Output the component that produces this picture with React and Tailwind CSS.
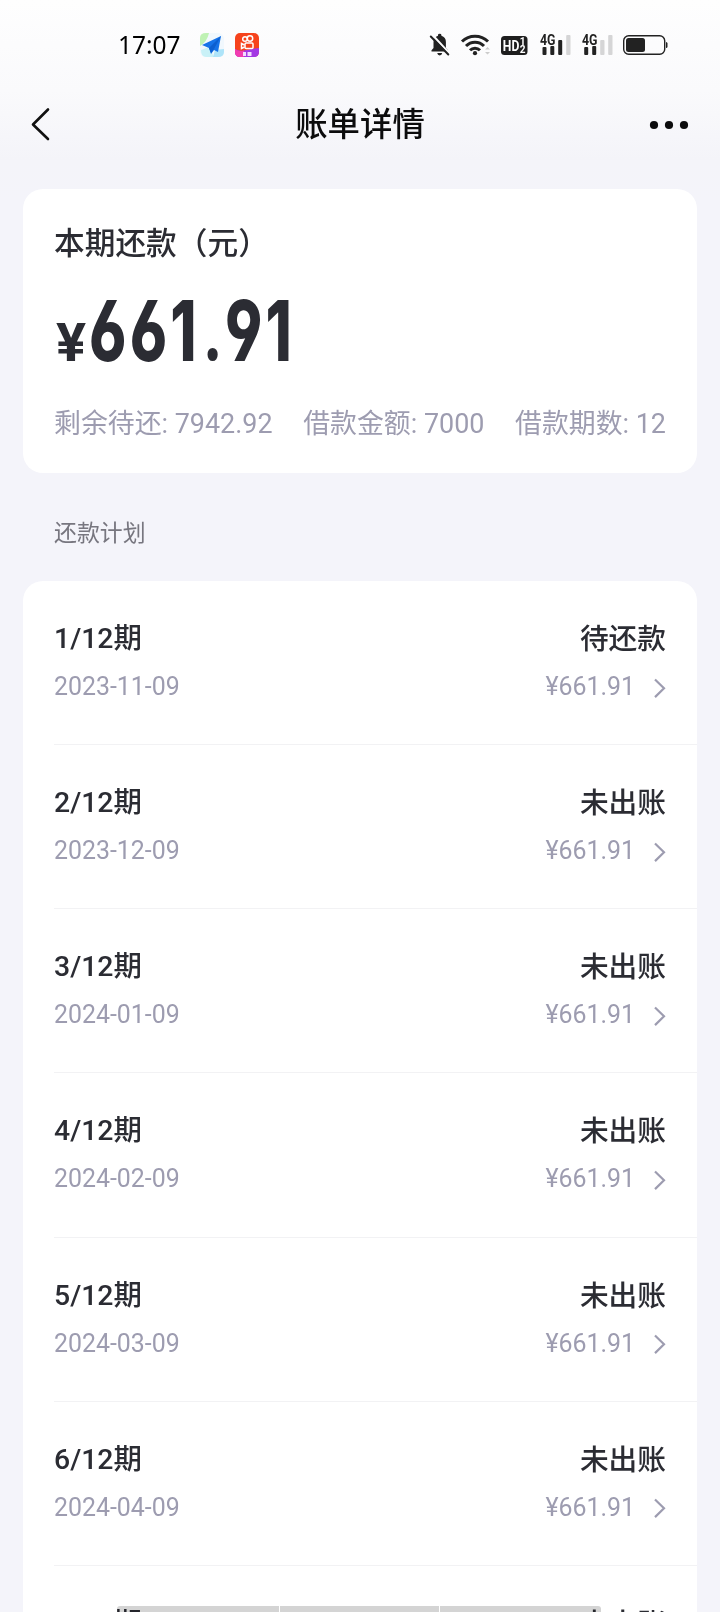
const installments = [
  ["1", "2023-11-09", "待还款"],
  ["2", "2023-12-09", "未出账"],
  ["3", "2024-01-09", "未出账"],
  ["4", "2024-02-09", "未出账"],
  ["5", "2024-03-09", "未出账"],
  ["6", "2024-04-09", "未出账"],
  ["7", "2024-05-09", "未出账"],
];

function StatusBar() {
  return (
    <div className="flex h-[90px] items-center pl-[118px] text-black">
      <span className="w-[81px] font-['Noto_Sans'] text-[24.5px] leading-[30px]">17:07</span>
      <svg className="h-[26px] w-[26px]" viewBox="0 0 26 26">
        <rect x="1" y="1" width="24" height="24" rx="6" fill="#f1f8fd" />
        <path d="M1 14V6q0-5 6-5h3Q8 10 1 14Z" fill="#bff2b4" />
        <path d="M2 18l8-3 5 10H7q-5 0-5-7Z" fill="#c9f1f7" />
        <path d="M16 18l9-1v3q0 5-6 5h-5Z" fill="#aee4f9" />
        <path d="M22 4 3 13l7 3 2 6 3-4 4 2Z" fill="#1673e8" />
        <path d="M22 4 10 16l2 5 3-4Z" fill="#0c5fd0" />
      </svg>
      <svg className="ml-[9px] h-[26px] w-[26px]" viewBox="0 0 26 26">
        <rect x="1" y="1" width="24" height="24" rx="5" fill="#f6431c" />
        <path d="M1 17q4 3 12 1t12-2v4q0 5-5 5H6q-5 0-5-5Z" fill="#a338e4" />
        <path d="M1 17q4 3 9 1.500v6.500H6q-5 0-5-5Z" fill="#f23cb0" />
        <g fill="none" stroke="#fff" strokeWidth="1.500">
          <circle cx="11" cy="7" r="2.300" />
          <circle cx="16" cy="6.500" r="2.700" />
          <rect x="11" y="11" width="8" height="5.500" rx="1" />
          <path d="M10.500 13 7.500 11.500v5l3-1.500" />
        </g>
        <path d="M9 20h3v4H9zM13.500 20h4v4h-4z" fill="#f3dcff" />
      </svg>
      <svg className="ml-[167px] h-[36px] w-[242px]" viewBox="428 27 242 36">
        <g fill="#222">
          <path d="M432.500 51.500v-1.300l2-2.200v-6q0-5 4.500-6.300v-.7q0-1.300 1.700-1.300t1.700 1.300v.7q4.500 1.300 4.500 6.300v6l2 2.200v1.300Z" />
          <path d="M438.200 53h5q-.4 2.400-2.500 2.400T438.200 53Z" />
        </g>
        <path d="m433.500 35 17 18.500" stroke="#fdfdfe" strokeWidth="2.200" />
        <path d="m431.800 36.500 17.500 18" stroke="#222" strokeWidth="2" strokeLinecap="round" />
        <g fill="none" stroke="#222" strokeWidth="3">
          <path d="M463 41.500a18.500 18.500 0 0 1 26 0" />
          <path d="M467 46a12.500 12.500 0 0 1 18 0" />
          <path d="M471 50.300a7 7 0 0 1 10 0" />
        </g>
        <circle cx="476" cy="53.200" r="2.100" fill="#222" />
        <path d="m486 49.500 2.500-2.500 2.500 2.500ZM486 52l2.500 2.500L491 52Z" fill="#ccc" />
        <rect x="502" y="36" width="26.500" height="19" rx="3.500" fill="#1e1e1e" />
        <g className="font-['Roboto']" fontWeight="700">
          <text x="503.800" y="51" fontSize="15.500" textLength="16.500" lengthAdjust="spacingAndGlyphs" fill="#fff">HD</text>
          <text x="520.800" y="45.200" fontSize="10" fill="#fff">1</text>
          <text x="520.800" y="53.400" fontSize="10" fill="#fff">2</text>
          <text x="541" y="45" fontSize="14.500" textLength="15.500" lengthAdjust="spacingAndGlyphs" fill="#222">4G</text>
          <text x="583" y="45" fontSize="14.500" textLength="15.500" lengthAdjust="spacingAndGlyphs" fill="#222">4G</text>
        </g>
        <g fill="#222">
          <rect x="543.500" y="47" width="4" height="8" rx="1" />
          <rect x="551.300" y="46" width="4" height="9" rx="1" />
          <rect x="559.200" y="40" width="4" height="15" rx="1" />
          <rect x="585.200" y="47" width="4" height="8" rx="1" />
          <rect x="593.200" y="46" width="4" height="9" rx="1" />
        </g>
        <g fill="#d5d5d6">
          <rect x="567.200" y="35" width="4.300" height="20" rx="1" />
          <rect x="601.200" y="40" width="4.300" height="15" rx="1" />
          <rect x="609.200" y="35" width="4.300" height="20" rx="1" />
        </g>
        <rect x="624.700" y="35.700" width="41" height="18.600" rx="5" fill="none" stroke="#222" strokeWidth="1.400" />
        <rect x="627" y="38" width="19" height="14" rx="2.500" fill="#222" />
        <path d="M667 42q1.500 0 1.500 1.500v3q0 1.500-1.500 1.500Z" fill="#222" />
      </svg>
    </div>
  );
}

function Header() {
  return (
    <header className="flex h-[68px] items-center justify-between pr-[31px] pl-[31px]">
      <svg className="h-[36px] w-[40px]" viewBox="0 0 40 36" fill="none">
        <path d="M17 3.500 2 18.500 17 33" stroke="#111" strokeWidth="2.600" strokeLinecap="round" strokeLinejoin="round" />
      </svg>
      <h1 className="pt-[2px] text-[32.400px] leading-[44px] font-medium text-[#0c0c0d]">账单详情</h1>
      <svg className="h-[12px] w-[40px]" viewBox="0 0 40 12" fill="#0c0c0d">
        <circle cx="5" cy="7" r="4.100" />
        <circle cx="20" cy="7" r="4.100" />
        <circle cx="35" cy="7" r="4.100" />
      </svg>
    </header>
  );
}

function Summary() {
  return (
    <section className="mx-[23px] mt-[31px] h-[284px] rounded-[20px] bg-white px-[31px] pt-[33px]">
      <h2 className="text-[30.700px] leading-[44px] font-medium text-[#2b2c33]">本期还款（元）</h2>
      <div className="mt-[20px] flex h-[90px] items-baseline text-[#2b2c33]">
        <span className="w-[35px] pl-[2px] text-[54px] leading-[90px] font-bold">
          <span className="inline-block origin-left scale-x-[1.040]">¥</span>
        </span>
        <span className="inline-block origin-left scale-x-[.71] font-['Inter'] text-[84px] leading-[90px] font-extrabold tracking-[4.500px] [font-feature-settings:'cv03','cv04']">
          661<span className="ml-[6px] font-['Roboto'] font-extrabold">.</span>91
        </span>
      </div>
      <div className="mt-[30px] flex justify-between text-[26.900px] leading-[36px] whitespace-nowrap text-[#9d9cb0]">
        <span>剩余待还: 7942.92</span>
        <span>借款金额: 7000</span>
        <span>借款期数: 12</span>
      </div>
    </section>
  );
}

function Installment({ index, date, status }) {
  return (
    <li className="h-[164.160px] pl-[31px]">
      <div className="flex h-full justify-between border-b border-[#f2f2f4] pt-[38px] pr-[31px]">
        <div>
          <div className="text-[28.400px] leading-[40px] font-medium text-[#2b2c33]">{index}/12期</div>
          <div className="mt-[10px] text-[24.900px] leading-[36px] text-[#9d9cb0]">{date}</div>
        </div>
        <div className="flex flex-col items-end">
          <div className="text-[28.700px] leading-[40px] font-medium text-[#2b2c33]">{status}</div>
          <div className="mt-[10px] flex items-center text-[24.900px] leading-[36px] text-[#9d9cb0]">
            ¥661.91
            <svg className="mt-[1px] ml-[18px] h-[20px] w-[13px]" viewBox="0 0 13 20" fill="none">
              <path d="m2 1.500 9 8.800-9 8.800" stroke="#9d9cb0" strokeWidth="2.200" />
            </svg>
          </div>
        </div>
      </div>
    </li>
  );
}

export default function App() {
  return (
    <div className="relative h-[1612px] w-[720px] overflow-hidden bg-[#f4f4fa] bg-[linear-gradient(#fefefe_0px,#fafafc_90px,#f4f4f9_160px,#f4f4fa_200px)] font-['Roboto','Noto_Sans_CJK_SC',sans-serif]">
      <StatusBar />
      <Header />
      <Summary />
      <h3 className="mt-[43px] pl-[54px] text-[22.900px] leading-[36px] text-[#77767f]">还款计划</h3>
      <ul className="mx-[23px] mt-[29px] rounded-[20px] bg-white">
        {installments.map(([index, date, status]) => (
          <Installment key={index} index={index} date={date} status={status} />
        ))}
      </ul>
      <div className="absolute bottom-0 left-[117px] flex h-[6px] w-[484px] gap-px overflow-hidden rounded-t-[3px] mix-blend-multiply">
        <div className="w-[162px] bg-[#d4d4d4]" />
        <div className="w-[159px] bg-[#d4d4d4]" />
        <div className="flex-1 bg-[#d4d4d4]" />
      </div>
    </div>
  );
}
